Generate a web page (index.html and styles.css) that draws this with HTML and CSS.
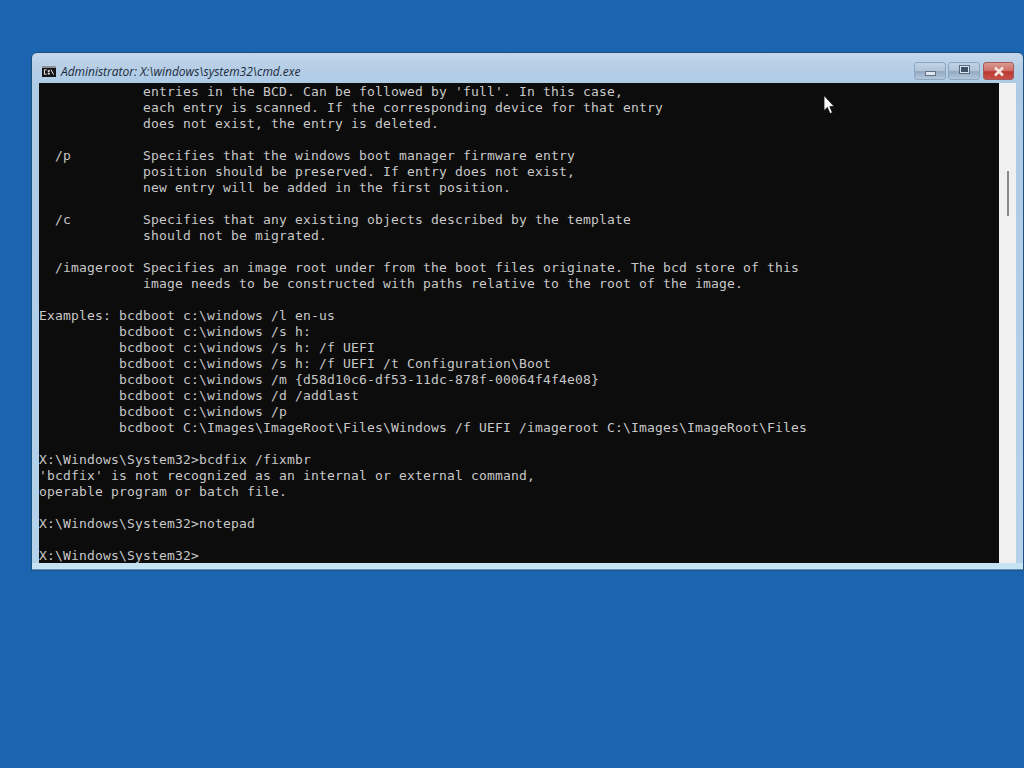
FILE: index.html
```html
<!DOCTYPE html>
<html lang="en">
<head>
<meta charset="utf-8">
<title>cmd.exe</title>
<link rel="stylesheet" href="styles.css">
</head>
<body>
<div class="window">
  <div class="titlebar">
    <svg class="app-icon" width="14" height="11" viewBox="0 0 14 11">
      <rect width="14" height="11" fill="#151515"/>
      <rect width="14" height="2" fill="#8a8f96"/>
      <path d="M4.6 3.8H2.4v4.4h2.2M6.2 4.4h1.2v1.1H6.2zM6.2 7h1.2v1.1H6.2zM9 3.6l2.6 5" fill="none" stroke="#ececec" stroke-width="1"/>
    </svg>
    <span class="title">Administrator: X:\windows\system32\cmd.exe</span>
    <div class="controls">
      <div class="btn"><span class="min-glyph"></span></div>
      <div class="btn"><span class="max-glyph"></span></div>
      <div class="btn close">
        <svg width="14" height="11" viewBox="0 0 14 11"><path d="M3 1.5l8 8M11 1.5l-8 8" stroke="#f3e6e0" stroke-width="2.6" fill="none"/></svg>
      </div>
    </div>
  </div>
  <div class="client">
<pre class="console">             entries in the BCD. Can be followed by 'full'. In this case,
             each entry is scanned. If the corresponding device for that entry
             does not exist, the entry is deleted.

  /p         Specifies that the windows boot manager firmware entry
             position should be preserved. If entry does not exist,
             new entry will be added in the first position.

  /c         Specifies that any existing objects described by the template
             should not be migrated.

  /imageroot Specifies an image root under from the boot files originate. The bcd store of this
             image needs to be constructed with paths relative to the root of the image.

Examples: bcdboot c:\windows /l en-us
          bcdboot c:\windows /s h:
          bcdboot c:\windows /s h: /f UEFI
          bcdboot c:\windows /s h: /f UEFI /t Configuration\Boot
          bcdboot c:\windows /m {d58d10c6-df53-11dc-878f-00064f4f4e08}
          bcdboot c:\windows /d /addlast
          bcdboot c:\windows /p
          bcdboot C:\Images\ImageRoot\Files\Windows /f UEFI /imageroot C:\Images\ImageRoot\Files

X:\Windows\System32&gt;bcdfix /fixmbr
'bcdfix' is not recognized as an internal or external command,
operable program or batch file.

X:\Windows\System32&gt;notepad

X:\Windows\System32&gt;</pre>
    <div class="scrollbar"><div class="thumb"></div></div>
  </div>
  <div class="bottom-edge"></div>
</div>
<svg class="cursor" width="12" height="20" viewBox="0 0 12 20">
  <path d="M1 0.5V15.5L4.4 12.4L7 18.6L9.4 17.6L6.8 11.6H11.2Z" fill="#fff" stroke="#111" stroke-width="0.8"/>
</svg>
</body>
</html>
```
FILE: styles.css
```css
html, body {
  margin: 0;
  padding: 0;
  width: 1024px;
  height: 768px;
  overflow: hidden;
  background: #1b65b0;
}
body {
  position: relative;
  padding-top: 52px;
  box-sizing: border-box;
}
.window {
  margin-left: 31px;
  width: 993px;
  height: 519px;
  box-sizing: border-box;
  border: 1px solid #1d4f80;
  border-radius: 6px 6px 0 0;
  background: linear-gradient(180deg, #c4d8ea 0, #b8cfe6 12px, #aecbe6 30px, #b4d2ea 100%);
  padding: 0 6px 0 7px;
  display: flex;
  flex-direction: column;
}
.titlebar {
  height: 30px;
  flex: none;
  display: flex;
  align-items: flex-start;
}
.app-icon {
  margin: 13px 0 0 3px;
  flex: none;
}
.title {
  margin: 10px 0 0 5px;
  font: italic 12px/17px "Open Sans", sans-serif;
  color: #1b2a3c;
  letter-spacing: -0.02px;
  white-space: nowrap;
}
.controls {
  margin-left: auto;
  margin-right: 3px;
  margin-top: 9px;
  display: flex;
  gap: 2px;
}
.btn {
  width: 32px;
  height: 18px;
  box-sizing: border-box;
  border: 1px solid #8fa6bf;
  border-radius: 3px;
  background: linear-gradient(180deg, #c2d3e5 0, #b0c4d8 48%, #93a9c0 54%, #b3c8dc 100%);
  display: flex;
  align-items: center;
  justify-content: center;
}
.close {
  width: 31px;
  margin-left: 1px;
  border-color: #a35a57;
  background: linear-gradient(180deg, #d99a92 0, #cd6e66 48%, #b93a33 54%, #c64f47 100%);
}
.min-glyph {
  width: 11px;
  height: 5px;
  margin-top: 5px;
  box-sizing: border-box;
  background: #dfe8f1;
  border: 1px solid #5d7288;
}
.max-glyph {
  width: 11px;
  height: 9px;
  margin-top: -3px;
  box-sizing: border-box;
  background: #3f5268;
  border: 2px solid #dbe5ef;
  outline: 1px solid #56697e;
  outline-offset: -1px;
}
.client {
  flex: none;
  height: 480px;
  display: flex;
}
.console {
  margin: 0;
  width: 960px;
  flex: none;
  height: 480px;
  box-sizing: border-box;
  padding-top: 1px;
  overflow: hidden;
  background: #0c0c0c;
  color: #c8c8c8;
  font: 13px/16px "DejaVu Sans Mono", monospace;
  letter-spacing: 0.174px;
}
.scrollbar {
  width: 17px;
  flex: none;
  background: #f0f0f0;
  padding-top: 88px;
  box-sizing: border-box;
}
.thumb {
  width: 2px;
  height: 45px;
  margin-left: 8px;
  background: #8b8b8b;
}
.bottom-edge {
  flex: 1;
  margin: 0 -6px 0 -7px;
  background: #c6e2f3;
  border-bottom: 1px solid #5f93c0;
}
.cursor {
  position: absolute;
  left: 823px;
  top: 95px;
}
```
